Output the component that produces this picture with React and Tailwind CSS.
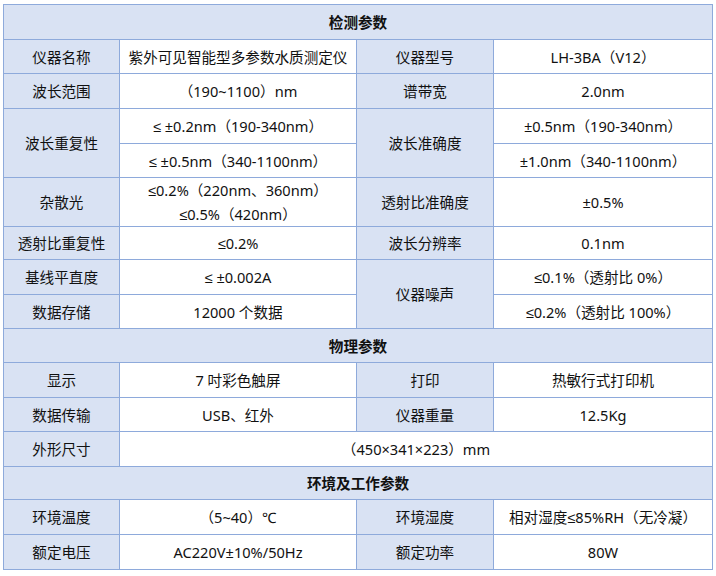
import React from "react";

const L = "border border-[#8eaadb] bg-[#d9e2f3] text-center align-middle";
const V = "border border-[#8eaadb] bg-white text-center align-middle";
const H = "border border-[#8eaadb] bg-[#d9e2f3] text-center align-middle font-bold";

export default function App() {
  return (
    <div className="w-[716px] h-[576px] bg-white pt-[4px] pl-[3px]" style={{ fontFamily: '"Noto Sans", "Liberation Sans", "Noto Sans CJK SC", sans-serif' }}>
      <table className="border-collapse table-fixed text-[14.6px] text-[#111] leading-[24px]" style={{ width: 709 }}>
        <colgroup>
          <col style={{ width: 116 }} />
          <col style={{ width: 237 }} />
          <col style={{ width: 137 }} />
          <col style={{ width: 219 }} />
        </colgroup>
        <tbody>
          <tr className="h-[35px]"><td colSpan={4} className={H}>检测参数</td></tr>
          <tr className="h-[34px]">
            <td className={L}>仪器名称</td><td className={V}>紫外可见智能型多参数水质测定仪</td>
            <td className={L}>仪器型号</td><td className={V}>LH-3BA（V12）</td>
          </tr>
          <tr className="h-[35px]">
            <td className={L}>波长范围</td><td className={V}>（190~1100）nm</td>
            <td className={L}>谱带宽</td><td className={V}>2.0nm</td>
          </tr>
          <tr className="h-[35px]">
            <td rowSpan={2} className={L}>波长重复性</td><td className={V}>≤ ±0.2nm（190-340nm）</td>
            <td rowSpan={2} className={L}>波长准确度</td><td className={V}>±0.5nm（190-340nm）</td>
          </tr>
          <tr className="h-[34px]">
            <td className={V}>≤ ±0.5nm（340-1100nm）</td>
            <td className={V}>±1.0nm（340-1100nm）</td>
          </tr>
          <tr className="h-[49px]">
            <td className={L}>杂散光</td><td className={V}>≤0.2%（220nm、360nm）<br />≤0.5%（420nm）</td>
            <td className={L}>透射比准确度</td><td className={V}>±0.5%</td>
          </tr>
          <tr className="h-[33px]">
            <td className={L}>透射比重复性</td><td className={V}>≤0.2%</td>
            <td className={L}>波长分辨率</td><td className={V}>0.1nm</td>
          </tr>
          <tr className="h-[35px]">
            <td className={L}>基线平直度</td><td className={V}>≤ ±0.002A</td>
            <td rowSpan={2} className={L}>仪器噪声</td><td className={V}>≤0.1%（透射比 0%）</td>
          </tr>
          <tr className="h-[34px]">
            <td className={L}>数据存储</td><td className={V}>12000 个数据</td>
            <td className={V}>≤0.2%（透射比 100%）</td>
          </tr>
          <tr className="h-[34px]"><td colSpan={4} className={H}>物理参数</td></tr>
          <tr className="h-[35px]">
            <td className={L}>显示</td><td className={V}>7 吋彩色触屏</td>
            <td className={L}>打印</td><td className={V}>热敏行式打印机</td>
          </tr>
          <tr className="h-[34px]">
            <td className={L}>数据传输</td><td className={V}>USB、红外</td>
            <td className={L}>仪器重量</td><td className={V}>12.5Kg</td>
          </tr>
          <tr className="h-[35px]">
            <td className={L}>外形尺寸</td><td colSpan={3} className={V}>（450×341×223）mm</td>
          </tr>
          <tr className="h-[33px]"><td colSpan={4} className={H}>环境及工作参数</td></tr>
          <tr className="h-[35px]">
            <td className={L}>环境温度</td><td className={V}>（5~40）℃</td>
            <td className={L}>环境湿度</td><td className={V}>相对湿度≤85%RH（无冷凝）</td>
          </tr>
          <tr className="h-[35px]">
            <td className={L}>额定电压</td><td className={V}>AC220V±10%/50Hz</td>
            <td className={L}>额定功率</td><td className={V}>80W</td>
          </tr>
        </tbody>
      </table>
    </div>
  );
}
